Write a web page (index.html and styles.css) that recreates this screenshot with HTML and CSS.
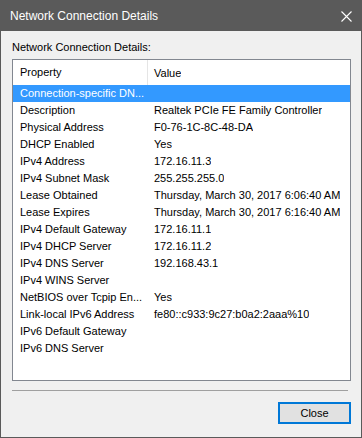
FILE: index.html
```html
<!DOCTYPE html>
<html>
<head>
    <meta charset="UTF-8">
    <title>Network Connection Details</title>
    <link rel="stylesheet" href="styles.css">
</head>
<body>
    <div class="window">
        <div class="titlebar">
            <span class="title">Network Connection Details</span>
            <svg class="close-x" width="11" height="11" viewBox="0 0 11 11">
                <path d="M0.5 0.5 L10.5 10.5 M10.5 0.5 L0.5 10.5" stroke="#ffffff" stroke-width="1.1" fill="none"/>
            </svg>
        </div>
        <div class="content">
            <div class="label">Network Connection Details:</div>
            <div class="listbox">
                <div class="list-header">
                    <div class="col prop">Property</div>
                    <div class="col val">Value</div>
                </div>
                <div class="row selected"><div class="col prop">Connection-specific DN...</div><div class="col val"></div></div>
                <div class="row"><div class="col prop">Description</div><div class="col val">Realtek PCIe FE Family Controller</div></div>
                <div class="row"><div class="col prop">Physical Address</div><div class="col val">F0-76-1C-8C-48-DA</div></div>
                <div class="row"><div class="col prop">DHCP Enabled</div><div class="col val">Yes</div></div>
                <div class="row"><div class="col prop">IPv4 Address</div><div class="col val">172.16.11.3</div></div>
                <div class="row"><div class="col prop">IPv4 Subnet Mask</div><div class="col val">255.255.255.0</div></div>
                <div class="row"><div class="col prop">Lease Obtained</div><div class="col val">Thursday, March 30, 2017 6:06:40 AM</div></div>
                <div class="row"><div class="col prop">Lease Expires</div><div class="col val">Thursday, March 30, 2017 6:16:40 AM</div></div>
                <div class="row"><div class="col prop">IPv4 Default Gateway</div><div class="col val">172.16.11.1</div></div>
                <div class="row"><div class="col prop">IPv4 DHCP Server</div><div class="col val">172.16.11.2</div></div>
                <div class="row"><div class="col prop">IPv4 DNS Server</div><div class="col val">192.168.43.1</div></div>
                <div class="row"><div class="col prop">IPv4 WINS Server</div><div class="col val"></div></div>
                <div class="row"><div class="col prop">NetBIOS over Tcpip En...</div><div class="col val">Yes</div></div>
                <div class="row"><div class="col prop">Link-local IPv6 Address</div><div class="col val">fe80::c933:9c27:b0a2:2aaa%10</div></div>
                <div class="row"><div class="col prop">IPv6 Default Gateway</div><div class="col val"></div></div>
                <div class="row"><div class="col prop">IPv6 DNS Server</div><div class="col val"></div></div>
            </div>
            <div class="separator"></div>
            <div class="buttons">
                <button class="close-btn">Close</button>
            </div>
        </div>
    </div>
</body>
</html>
```
FILE: styles.css
```css
body {
    margin: 0;
    padding: 0;
    font-family: "Liberation Sans", Arial, sans-serif;
    font-size: 11px;
    color: #000000;
}
.window {
    width: 362px;
    height: 438px;
    box-sizing: border-box;
    border: 1px solid #5a5a5a;
    border-top: none;
    background-color: #f0f0f0;
    display: flex;
    flex-direction: column;
}
.titlebar {
    height: 31px;
    margin: 0 -1px;
    background-color: #5a5a5a;
    display: flex;
    align-items: center;
    justify-content: space-between;
    padding: 0 10px 0 10px;
    flex-shrink: 0;
}
.title {
    color: #ffffff;
    font-size: 12px;
    padding-top: 1px;
}
.close-x {
    display: block;
    margin-top: 1px;
}
.content {
    padding: 10px 10px 0 11px;
    display: flex;
    flex-direction: column;
}
.label {
    line-height: 13px;
    margin-bottom: 5px;
}
.listbox {
    height: 322px;
    box-sizing: border-box;
    border: 1px solid #828790;
    background-color: #ffffff;
}
.list-header {
    height: 25px;
    display: flex;
    align-items: center;
}
.list-header .prop {
    border-right: 1px solid #e5e5e5;
    height: 25px;
    line-height: 24px;
}
.row {
    height: 17px;
    line-height: 17px;
    display: flex;
}
.col {
    white-space: nowrap;
    overflow: hidden;
}
.prop {
    width: 127px;
    padding-left: 7px;
    flex-shrink: 0;
}
.val {
    padding-left: 6px;
}
.row .prop {
    width: 128px;
}
.selected {
    background-color: #3399ff;
    color: #ffffff;
}
.separator {
    height: 1px;
    margin: 9px 3px 0 0;
    background-color: #a0a0a0;
}
.buttons {
    display: flex;
    justify-content: flex-end;
    margin-top: 11px;
}
.close-btn {
    width: 73px;
    height: 22px;
    border: 2px solid #0078d7;
    background-color: #e1e1e1;
    font-family: "Liberation Sans", Arial, sans-serif;
    font-size: 11px;
    color: #000000;
    padding: 0;
}
```
